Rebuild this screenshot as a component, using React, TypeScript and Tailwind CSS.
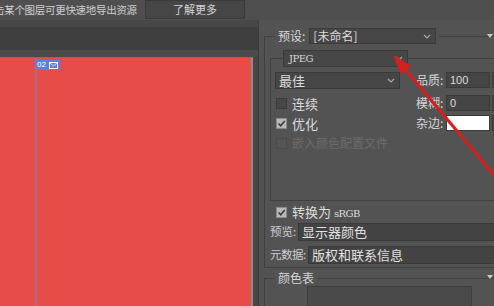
import React from "react";

const Chevron: React.FC = () => (
  <svg width="8" height="5" viewBox="0 0 8 5" className="shrink-0">
    <path d="M1 1 L4 4 L7 1" stroke="#a8a8a8" strokeWidth="1.2" fill="none" />
  </svg>
);

const MenuTri: React.FC = () => (
  <svg width="6" height="4" viewBox="0 0 6 4">
    <path d="M0 0 L6 0 L3 4 Z" fill="#c8c8c8" />
  </svg>
);

type CheckProps = { checked?: boolean; disabled?: boolean; label: React.ReactNode };

const Check: React.FC<CheckProps> = ({ checked, disabled, label }) => (
  <div className="flex items-center h-[12px] whitespace-nowrap">
    <div
      className={
        checked
          ? "w-[11px] h-[11px] bg-[#b9b9b9] border border-[#8a8a8a] flex items-center justify-center"
          : disabled
          ? "w-[11px] h-[11px] bg-[#555555] border border-[#4a4a4a]"
          : "w-[11px] h-[11px] bg-[#474747] border border-[#3a3a3a]"
      }
    >
      {checked && (
        <svg width="9" height="9" viewBox="0 0 9 9">
          <path d="M1.5 4.5 L3.7 6.7 L7.7 2" stroke="#3a3a3a" strokeWidth="1.6" fill="none" />
        </svg>
      )}
    </div>
    <span
      className={
        disabled
          ? "ml-[5px] text-[12px] leading-none text-[#6b6b6b]"
          : "ml-[5px] text-[13px] leading-none text-[#dcdcdc]"
      }
    >
      {label}
    </span>
  </div>
);

const FieldRow: React.FC<{ label: string; children: React.ReactNode; className?: string }> = ({
  label,
  children,
  className,
}) => (
  <div className={"flex items-center " + (className ?? "")}>
    <span className="w-[30px] whitespace-nowrap text-[12px] leading-none text-[#d6d6d6]">{label}</span>
    {children}
    <div className="ml-[2px] w-[10px] h-[16px] bg-[#464646] border border-[#3a3a3a]" />
  </div>
);

const App: React.FC = () => {
  return (
    <div className="relative w-[494px] h-[306px] overflow-hidden bg-[#535353] font-['Noto_Sans_CJK_SC','Noto_Sans',sans-serif] select-none">
      {/* top hint bar */}
      <div className="flex h-[20px] bg-[#4f4f4f]">
        <div className="w-[145px] overflow-hidden whitespace-nowrap text-[10.5px] leading-[20px] text-[#cfcfcf]">
          <span className="ml-[-6px] tracking-[-0.3px]">击某个图层可更快速地导出资源</span>
        </div>
        <div className="w-[100px] h-[19px] bg-[#464646] border border-[#3a3a3a] text-center text-[11px] leading-[17px] text-[#d4d4d4]">
          了解更多
        </div>
      </div>

      <div className="flex h-[286px]">
        {/* canvas column */}
        <div className="w-[258px] shrink-0 flex flex-col">
          <div className="h-[7px] bg-[#484848]" />
          <div className="h-[23px] bg-[#3f3f3f]" />
          <div className="h-[7px] bg-[#4b4b4b]" />
          <div className="flex-1 flex">
            <div className="relative w-[253px] bg-[#e84c49] border-t border-t-[#7468a6] border-r-2 border-r-[#8d8d8d]">
              <div className="absolute left-[35px] top-0 bottom-0 w-[2px] bg-[#a86c94]" />
              <div className="absolute left-[35px] top-[2px] h-[10px] w-[25px] bg-[#5d7fe2] flex items-center px-[2px] gap-[3px]">
                <span className="text-[8px] leading-none text-white font-['Liberation_Sans',sans-serif]">02</span>
                <svg width="9" height="7" viewBox="0 0 9 7">
                  <rect x="0.5" y="0.5" width="8" height="6" fill="none" stroke="#ffffff" strokeWidth="1" />
                  <path d="M0.5 0.5 L4.5 4 L8.5 0.5" stroke="#ffffff" strokeWidth="0.8" fill="none" />
                </svg>
              </div>
            </div>
            <div className="flex-1 bg-[#474747]" />
          </div>
        </div>

        {/* settings panel */}
        <div className="relative flex-1 min-w-0 overflow-hidden border-l border-[#3c3c3c] pt-[8px]">
          <div className="absolute right-[1px] top-[14px]">
            <MenuTri />
          </div>

          <fieldset className="ml-[5px] w-[240px] min-w-0 border-l border-t border-b border-[#404040] pb-[3px]">
            <legend className="ml-[10px] px-[3px] flex items-center h-[16px]">
              <span className="text-[12px] leading-none text-[#d8d8d8] whitespace-nowrap">预设:</span>
              <div className="ml-[4px] w-[127px] h-[16px] bg-[#464646] border border-[#3a3a3a] flex items-center justify-between pl-[3px] pr-[4px]">
                <span className="text-[12px] leading-none text-[#dcdcdc]">[未命名]</span>
                <Chevron />
              </div>
            </legend>

            <fieldset className="ml-[5px] mt-[6px] w-[230px] min-w-0 border-l border-t border-b border-[#404040]">
              <legend className="ml-[12px] w-[125px] h-[17px] bg-[#474747] border border-[#3a3a3a] flex items-center justify-between pl-[5px] pr-[4px]">
                <span className="text-[10px] leading-none text-[#d8d8d8] font-['DejaVu_Serif',serif] tracking-[-0.5px]">JPEG</span>
                <Chevron />
              </legend>

              <div className="h-[133px] flex pl-[4px] pt-[5px]">
                <div className="w-[125px] shrink-0 flex flex-col">
                  <div className="h-[17px] bg-[#464646] border border-[#3a3a3a] flex items-center justify-between pl-[3px] pr-[4px]">
                    <span className="text-[13px] leading-none text-[#dcdcdc]">最佳</span>
                    <Chevron />
                  </div>
                  <div className="mt-[8px] ml-[1px] flex flex-col gap-[8px]">
                    <Check label="连续" />
                    <Check checked label="优化" />
                    <Check disabled label="嵌入颜色配置文件" />
                  </div>
                </div>

                <div className="ml-[16px] shrink-0 flex flex-col">
                  <FieldRow label="品质:">
                    <div className="w-[44px] h-[16px] bg-[#454545] border border-[#3a3a3a] pl-[3px] text-[11px] leading-[14px] text-[#dcdcdc] font-['Liberation_Sans',sans-serif]">
                      100
                    </div>
                  </FieldRow>
                  <FieldRow label="模糊:" className="mt-[7px]">
                    <div className="w-[44px] h-[16px] bg-[#454545] border border-[#3a3a3a] pl-[3px] text-[11px] leading-[14px] text-[#dcdcdc] font-['Liberation_Sans',sans-serif]">
                      0
                    </div>
                  </FieldRow>
                  <FieldRow label="杂边:" className="mt-[4px]">
                    <div className="w-[44px] h-[16px] bg-white border border-[#3a3a3a]" />
                  </FieldRow>
                </div>
              </div>
            </fieldset>

            <div className="mt-[5px] ml-[11px]">
              <Check
                checked
                label={
                  <>
                    转换为 <span className="text-[10px] font-['DejaVu_Serif',serif] tracking-[-0.5px]">sRGB</span>
                  </>
                }
              />
            </div>

            <div className="mt-[5px] ml-[5px] flex items-center">
              <span className="w-[28px] shrink-0 whitespace-nowrap text-[11.5px] leading-none text-[#cfcfcf]">预览:</span>
              <div className="flex-1 h-[18px] bg-[#434343] border border-[#3a3a3a] pl-[3px] text-[13px] leading-[16px] text-[#e0e0e0] whitespace-nowrap">
                显示器颜色
              </div>
            </div>

            <div className="mt-[5px] ml-[5px] flex items-center">
              <span className="w-[38px] shrink-0 whitespace-nowrap text-[11.5px] leading-none text-[#cfcfcf] tracking-[-0.5px]">元数据:</span>
              <div className="flex-1 h-[18px] bg-[#434343] border border-[#3a3a3a] pl-[3px] text-[13px] leading-[16px] text-[#e0e0e0] whitespace-nowrap">
                版权和联系信息
              </div>
            </div>
          </fieldset>

          <div className="absolute right-[1px] top-[255px]">
            <MenuTri />
          </div>

          <fieldset className="ml-[5px] mt-[3px] w-[240px] min-w-0 border-l border-t border-[#404040]">
            <legend className="ml-[10px] px-[3px] text-[12px] leading-[14px] text-[#d6d6d6]">颜色表</legend>
            <div className="ml-[42px] mt-[1px] w-[165px] h-[30px] bg-[#4a4a4a] border border-[#3e3e3e]" />
          </fieldset>
        </div>
      </div>

      {/* red annotation arrow */}
      <svg className="absolute inset-0 pointer-events-none" width="494" height="306" viewBox="0 0 494 306">
        <line x1="404" y1="68" x2="500" y2="182" stroke="#d31f1f" strokeWidth="3.2" strokeLinecap="round" />
        <path d="M393 55 L400.7 74.5 L411.3 65.5 Z" fill="#d31f1f" />
      </svg>
    </div>
  );
};

export default App;
